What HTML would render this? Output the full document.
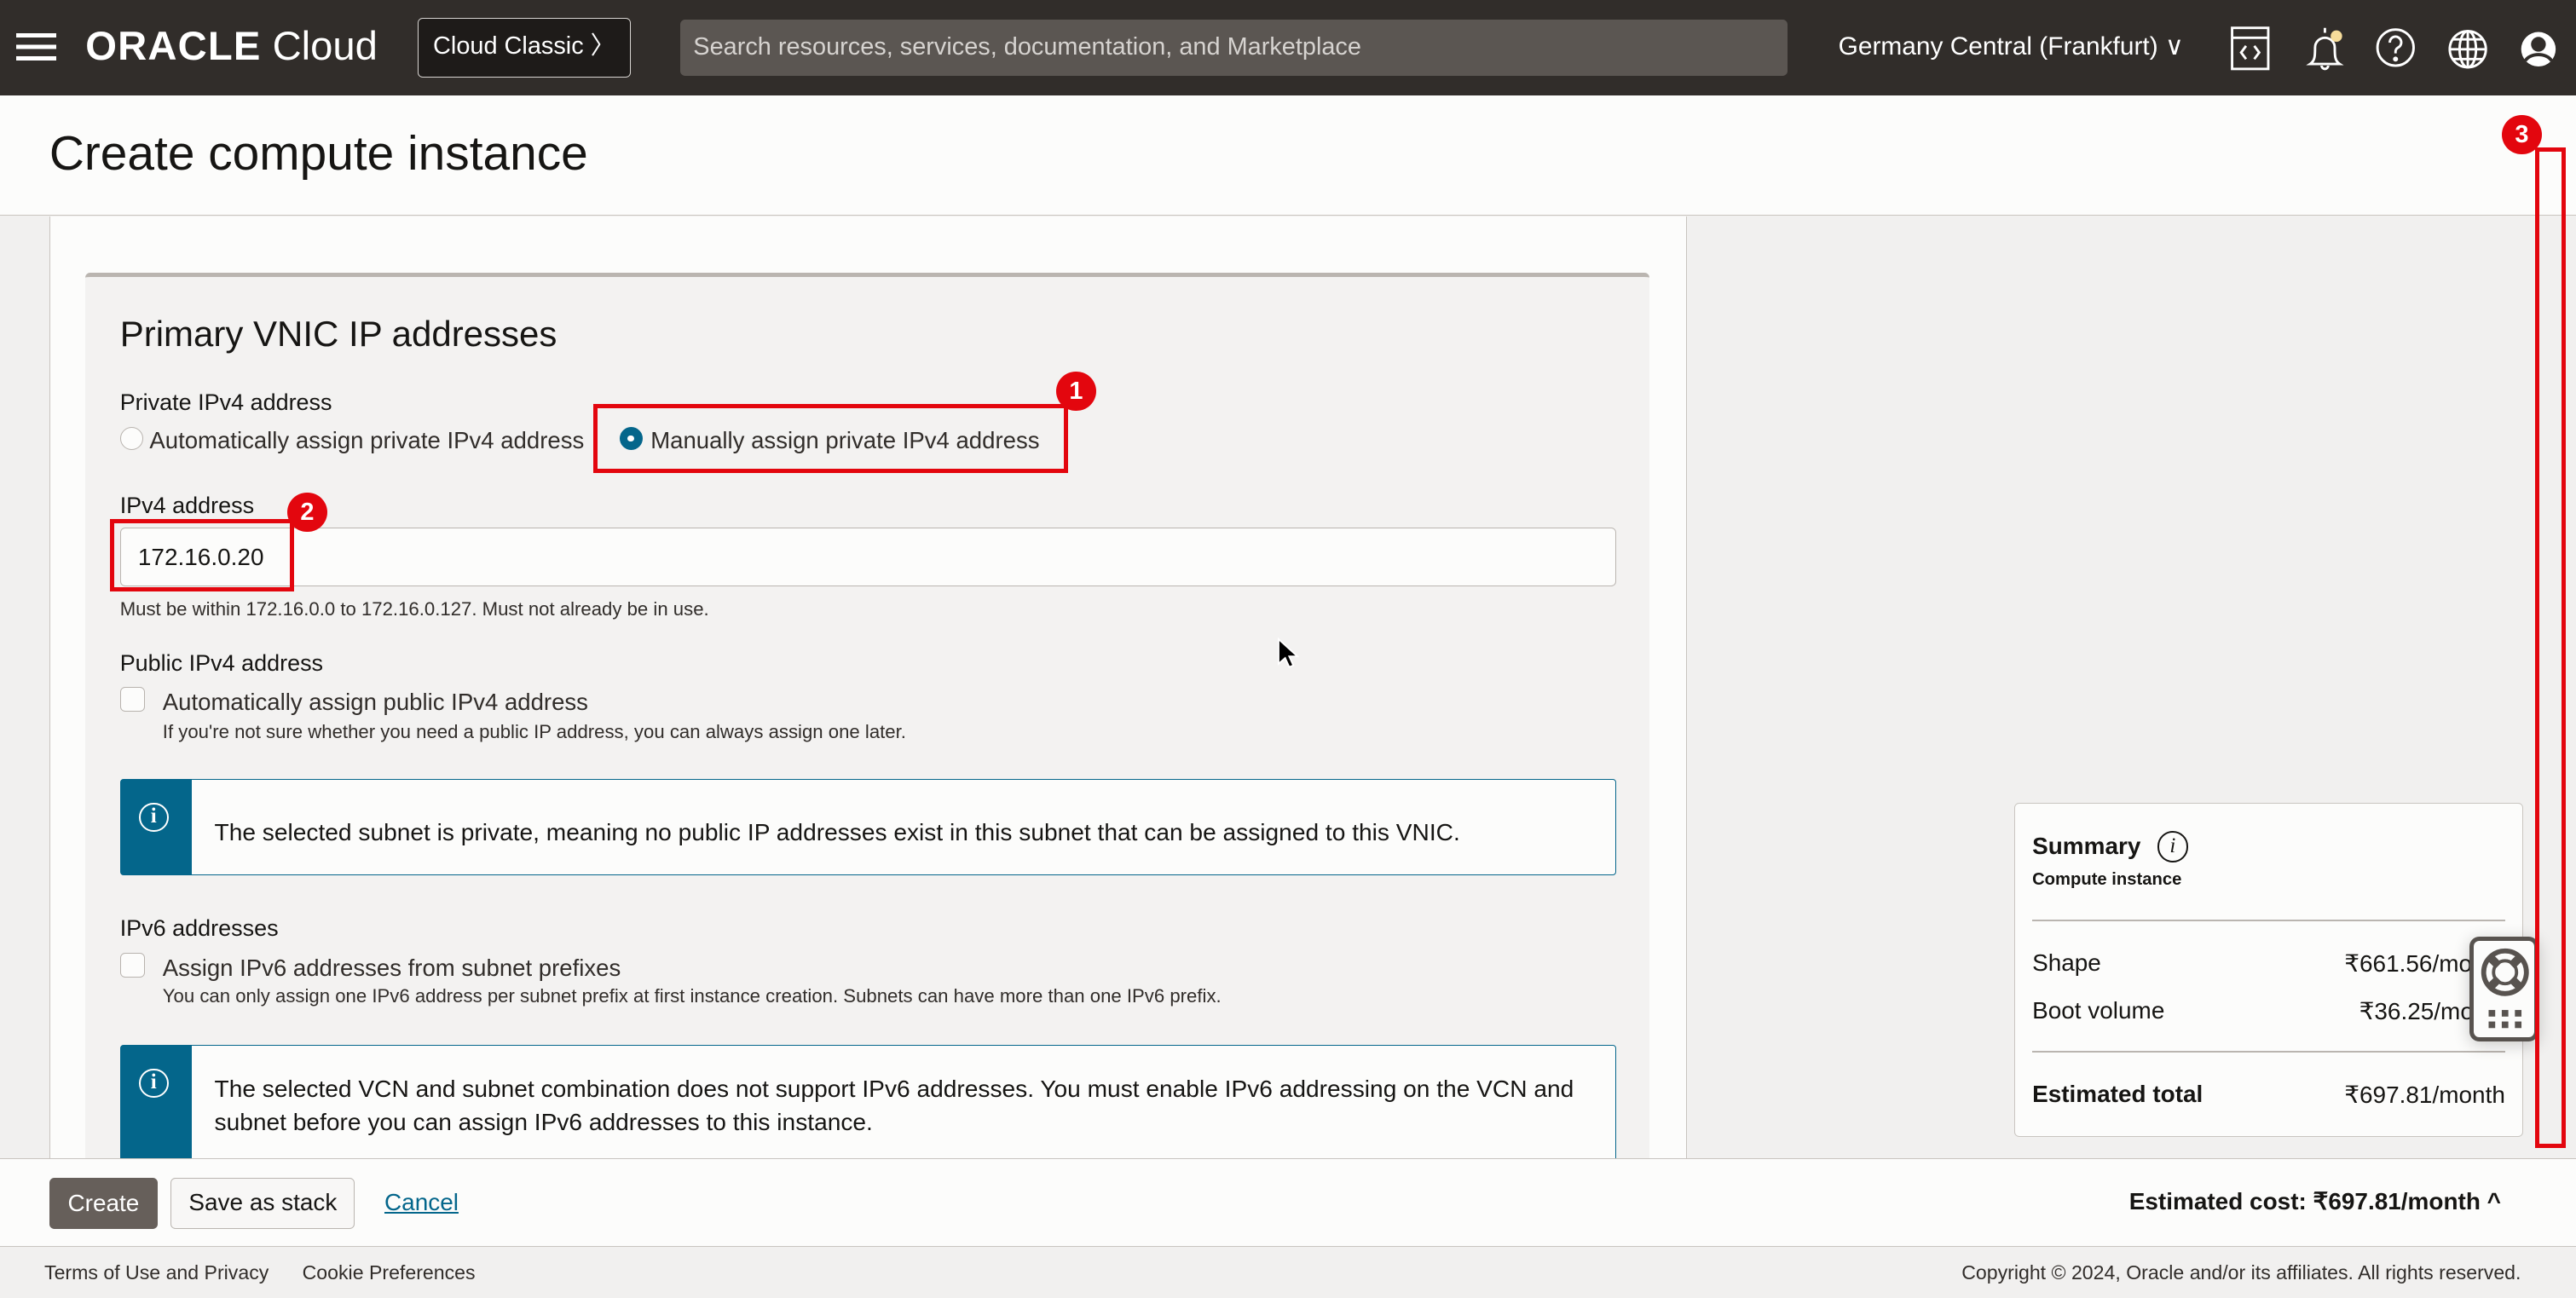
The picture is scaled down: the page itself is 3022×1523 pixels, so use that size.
<!DOCTYPE html>
<html><head><meta charset="utf-8"><style>
html,body{margin:0;padding:0;}
body{width:3022px;height:1522px;overflow:hidden;background:#f1f0ef;}
#r{zoom:1.9273;width:1568px;height:790px;position:relative;font-family:"Liberation Sans",sans-serif;color:#161513;overflow:hidden;background:#f1f0ef;}
.a{position:absolute;white-space:nowrap;}
.badge{position:absolute;width:24px;height:24px;border-radius:50%;background:#e3060e;color:#fff;font-weight:bold;font-size:15px;text-align:center;line-height:24px;}
.rb{position:absolute;border:3px solid #e3060e;box-sizing:border-box;}
.info{position:absolute;left:73px;width:911px;border:1px solid #04668b;background:#fcfcfb;border-radius:2px;box-sizing:border-box;}
.info .bar{position:absolute;left:0;top:0;bottom:0;width:43px;background:#04668b;}
.ic{position:absolute;left:11px;top:14px;width:18px;height:18px;border:1.5px solid #fff;border-radius:50%;box-sizing:border-box;color:#fff;font:bold 13px/15px "Liberation Serif",serif;text-align:center;}
.cb{position:absolute;width:15px;height:15px;border:1px solid #b8b3ae;border-radius:3px;background:#fcfcfb;box-sizing:border-box;}
.sm{font-size:11.5px;color:#312d2a;}
</style></head><body><div id="r">
<div class="a" style="left:0;top:0;width:1568px;height:58px;background:#312d2a;"></div>
<div class="a" style="left:10px;top:20px;width:24px;height:3px;background:#fff;box-shadow:0 7px 0 #fff,0 14px 0 #fff;"></div>
<div class="a" style="left:52px;top:14px;color:#fff;font-size:24.5px;"><b style="letter-spacing:0.6px">ORACLE</b> Cloud</div>
<div class="a" style="left:254px;top:11px;width:130px;height:36px;border:1px solid #d8d5d2;border-radius:3px;background:#1e1b19;box-sizing:border-box;color:#fff;font-size:15px;line-height:34px;text-align:center;">Cloud Classic 〉</div>
<div class="a" style="left:414px;top:12px;width:674px;height:34px;background:#5b5652;border-radius:3px;color:#d6d3d0;font-size:15px;line-height:34px;padding-left:8px;box-sizing:border-box;">Search resources, services, documentation, and Marketplace</div>
<div class="a" style="left:1119px;top:19px;color:#fff;font-size:15.5px;">Germany Central (Frankfurt) ∨</div>
<svg class="a" style="left:1352px;top:13px" width="210" height="34" viewBox="0 0 210 34" fill="none" stroke="#fff" stroke-width="1.5">
<rect x="6.5" y="4" width="22" height="25"/><line x1="6.5" y1="10" x2="28.5" y2="10"/><path d="M15 15l-3 4 3 4M20 15l3 4-3 4"/>
<path d="M54 26c3-2 3-5 3-10a6 6 0 0 1 12 0c0 5 0 8 3 10zM61 27a2 2 0 0 0 4 0M63 4v3"/><circle cx="70" cy="9" r="3.5" fill="#f6dc9a" stroke="none"/>
<circle cx="106" cy="16" r="11"/><path d="M102.5 13a3.5 3.5 0 1 1 5 3c-1 .6-1.5 1.2-1.5 2.5v1"/><circle cx="106" cy="23" r=".8" fill="#fff"/>
<circle cx="150" cy="17" r="11"/><ellipse cx="150" cy="17" rx="5" ry="11"/><path d="M139 17h22M141 11h18M141 23h18M150 6v22"/>
<circle cx="193" cy="17" r="10.5" fill="#fff" stroke="none"/><circle cx="193" cy="14" r="4.5" fill="#312d2a" stroke="none"/><path d="M185 24c3-5 13-5 16 0" stroke="#312d2a" stroke-width="2"/>
</svg>
<div class="a" style="left:0;top:58px;width:1568px;height:73px;background:#fcfcfb;border-bottom:1px solid #c9c5c0;"></div>
<div class="a" style="left:30px;top:77px;font-size:29.5px;">Create compute instance</div>
<div class="a" style="left:30px;top:132px;width:996px;height:573px;background:#fcfcfb;border-left:1px solid #c9c5c0;border-right:1px solid #c9c5c0;"></div>
<div class="a" style="left:52px;top:166px;width:952px;height:540px;background:#f3f2f1;border-top:3px solid #bab5b0;border-radius:3px 3px 0 0;"></div>
<div class="a" style="left:73px;top:191px;font-size:21.8px;">Primary VNIC IP addresses</div>
<div class="a" style="left:73px;top:237px;font-size:14px;">Private IPv4 address</div>
<div class="a" style="left:73px;top:260px;width:14px;height:14px;border:1px solid #b8b3ae;border-radius:50%;background:#fcfcfb;box-sizing:border-box;"></div>
<div class="a" style="left:91px;top:260px;font-size:14.3px;color:#312d2a;">Automatically assign private IPv4 address</div>
<div class="a" style="left:377px;top:260px;width:14px;height:14px;border-radius:50%;background:#04668b;"></div>
<div class="a" style="left:382px;top:265px;width:4px;height:4px;border-radius:50%;background:#fff;"></div>
<div class="a" style="left:396px;top:260px;font-size:14.3px;color:#312d2a;">Manually assign private IPv4 address</div>
<div class="rb" style="left:361px;top:246px;width:289px;height:42px;"></div>
<div class="badge" style="left:643px;top:226px;">1</div>
<div class="a" style="left:73px;top:300px;font-size:14px;">IPv4 address</div>
<div class="a" style="left:73px;top:321px;width:911px;height:36px;border:1px solid #bab5b0;background:#fcfcfb;border-radius:3px;box-sizing:border-box;"></div>
<div class="a" style="left:84px;top:331px;font-size:14.5px;">172.16.0.20</div>
<div class="rb" style="left:67px;top:316px;width:112px;height:44px;"></div>
<div class="badge" style="left:175px;top:300px;">2</div>
<div class="a sm" style="left:73px;top:364px;">Must be within 172.16.0.0 to 172.16.0.127. Must not already be in use.</div>
<div class="a" style="left:73px;top:396px;font-size:14px;">Public IPv4 address</div>
<div class="cb" style="left:73px;top:418px;"></div>
<div class="a" style="left:99px;top:419px;font-size:14.3px;color:#312d2a;">Automatically assign public IPv4 address</div>
<div class="a sm" style="left:99px;top:439px;">If you're not sure whether you need a public IP address, you can always assign one later.</div>
<div class="info" style="top:474px;height:59px;"><div class="bar"></div><div class="ic">i</div>
<div class="a" style="left:57px;top:24px;font-size:14.6px;">The selected subnet is private, meaning no public IP addresses exist in this subnet that can be assigned to this VNIC.</div></div>
<div class="a" style="left:73px;top:557px;font-size:14px;">IPv6 addresses</div>
<div class="cb" style="left:73px;top:580px;"></div>
<div class="a" style="left:99px;top:581px;font-size:14.3px;color:#312d2a;">Assign IPv6 addresses from subnet prefixes</div>
<div class="a sm" style="left:99px;top:600px;">You can only assign one IPv6 address per subnet prefix at first instance creation. Subnets can have more than one IPv6 prefix.</div>
<div class="info" style="top:636px;height:80px;"><div class="bar"></div><div class="ic">i</div>
<div class="a" style="left:57px;top:16px;font-size:14.6px;line-height:20.5px;">The selected VCN and subnet combination does not support IPv6 addresses. You must enable IPv6 addressing on the VCN and<br>subnet before you can assign IPv6 addresses to this instance.</div></div>
<svg class="a" style="left:777px;top:388px" width="14" height="20" viewBox="0 0 14 20"><path d="M1 1v15l4-3.5 2.5 5.5 2.5-1-2.5-5.5h5z" fill="#000" stroke="#fff" stroke-width="1"/></svg>
<div class="a" style="left:1226px;top:489px;width:310px;height:203px;background:#fcfcfb;border:1px solid #c9c5c0;border-radius:3px;box-sizing:border-box;"></div>
<div class="a" style="left:1237px;top:507px;font-size:14.5px;font-weight:bold;">Summary</div>
<div class="a" style="left:1313px;top:506px;width:19px;height:19px;border:1.2px solid #161513;border-radius:50%;box-sizing:border-box;font:italic 13px/17px 'Liberation Serif',serif;text-align:center;">i</div>
<div class="a" style="left:1237px;top:530px;font-size:10.5px;font-weight:bold;">Compute instance</div>
<div class="a" style="left:1237px;top:560px;width:288px;height:1px;background:#bab5b0;"></div>
<div class="a" style="left:1237px;top:578px;font-size:14.5px;">Shape</div>
<div class="a" style="left:1427px;top:578px;font-size:14.5px;">₹661.56/mo</div>
<div class="a" style="left:1237px;top:607px;font-size:14.5px;">Boot volume</div>
<div class="a" style="left:1436px;top:607px;font-size:14.5px;">₹36.25/mo</div>
<div class="a" style="left:1237px;top:640px;width:288px;height:1px;background:#bab5b0;"></div>
<div class="a" style="left:1237px;top:658px;font-size:14.5px;font-weight:bold;">Estimated total</div>
<div class="a" style="left:1427px;top:658px;font-size:14.5px;">₹697.81/month</div>
<div class="a" style="left:1503px;top:570px;width:42px;height:64px;background:#fcfcfb;border:3px solid #58534f;border-radius:6px;box-sizing:border-box;box-shadow:0 2px 10px rgba(0,0,0,.2);"></div>
<svg class="a" style="left:1508px;top:575px" width="34" height="54" viewBox="0 0 34 54"><circle cx="17" cy="17" r="13" fill="none" stroke="#58534f" stroke-width="3"/><circle cx="17" cy="17" r="7" fill="none" stroke="#58534f" stroke-width="2"/><path d="M8 8l5 5M26 8l-5 5M8 26l5-5M26 26l-5-5" stroke="#58534f" stroke-width="5"/>
<g fill="#58534f"><rect x="7" y="40" width="4" height="4"/><rect x="15" y="40" width="4" height="4"/><rect x="23" y="40" width="4" height="4"/><rect x="7" y="47" width="4" height="4"/><rect x="15" y="47" width="4" height="4"/><rect x="23" y="47" width="4" height="4"/></g></svg>
<div class="rb" style="left:1543px;top:90px;width:19px;height:609px;"></div>
<div class="badge" style="left:1523px;top:70px;">3</div>
<div class="a" style="left:0;top:705px;width:1568px;height:53px;background:#fcfcfb;border-top:1px solid #c9c5c0;border-bottom:1px solid #c9c5c0;"></div>
<div class="a" style="left:30px;top:717px;width:66px;height:31px;background:#665f5a;border-radius:3px;color:#fff;font-size:14.5px;line-height:31px;text-align:center;">Create</div>
<div class="a" style="left:104px;top:717px;width:112px;height:31px;border:1px solid #bab5b0;background:#f8f7f6;border-radius:3px;box-sizing:border-box;font-size:14.5px;line-height:29px;text-align:center;">Save as stack</div>
<div class="a" style="left:234px;top:724px;font-size:14.5px;color:#04668b;text-decoration:underline;">Cancel</div>
<div class="a" style="left:1296px;top:723px;font-size:14.5px;font-weight:bold;">Estimated cost: ₹697.81/month ^</div>
<div class="a" style="left:27px;top:768px;font-size:12px;color:#312d2a;">Terms of Use and Privacy</div>
<div class="a" style="left:184px;top:768px;font-size:12px;color:#312d2a;">Cookie Preferences</div>
<div class="a" style="left:1194px;top:768px;font-size:12px;color:#312d2a;">Copyright © 2024, Oracle and/or its affiliates. All rights reserved.</div>
</div></body></html>
